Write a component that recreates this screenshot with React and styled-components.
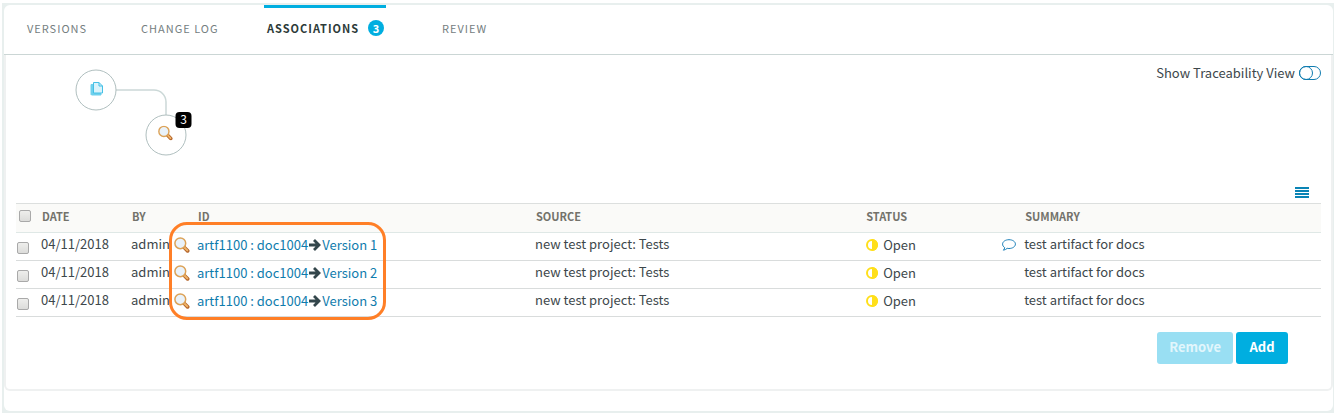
import React from "react";
import styled, { createGlobalStyle, css } from "styled-components";

const sans = `"Noto Sans CJK SC", "Noto Sans", sans-serif`;

const Global = createGlobalStyle`
  *, *::before, *::after { box-sizing: border-box; }
  body {
    margin: 0;
    padding: 3px 3px 4px 2px;
    background: #fff;
    color: #3d474b;
    font: 13px/20px ${sans};
  }
`;

const Frame = styled.div`
  padding: 2px 1px 2px 2px;
  background: #e8efee;
`;

const Card = styled.main`
  padding-bottom: 20px;
  background: #fff;
  border-radius: 6px;
`;

const Tabs = styled.nav`
  display: flex;
  height: 50px;
  padding-left: 20px;
  border-bottom: 1px solid #cbd6d5;
`;

const Tab = styled.button`
  display: flex;
  align-items: center;
  width: ${(p) => p.$width}px;
  padding: 0 0 6px 3px;
  border: 0;
  border-top: 3px solid transparent;
  background: none;
  color: #75807f;
  font: 400 11px/20px ${sans};
  letter-spacing: 1px;
  margin-right: ${(p) => p.$gap || 0}px;
  white-space: nowrap;
  ${(p) =>
    p.$active &&
    css`
      border-top-color: #00aee0;
      color: #2c3a38;
      font-weight: 600;
    `}
`;

const Count = styled.span`
  width: 16px;
  height: 16px;
  margin: 0 2px 0 auto;
  border-radius: 50%;
  background: #00aee0;
  color: #fff;
  font-size: 11px;
  line-height: 16px;
  letter-spacing: 0;
  text-align: center;
`;

const Panel = styled.section`
  padding: 8px 10px 25px;
  border: 2px solid #eff1f1;
  border-top: 0;
  border-radius: 0 0 6px 6px;
`;

const Top = styled.div`
  display: flex;
  justify-content: space-between;
  align-items: flex-start;
  height: 120px;
  padding-left: 54px;
`;

const ToggleLabel = styled.label`
  display: flex;
  align-items: center;
  gap: 4px;
`;

const Toggle = styled.input`
  appearance: none;
  width: 22px;
  height: 14px;
  margin: 0;
  border: 1px solid #0f7cb0;
  border-radius: 7px;
  &::before {
    content: "";
    display: block;
    width: 14px;
    height: 14px;
    margin: -1px;
    border: 1px solid #0f7cb0;
    border-radius: 50%;
  }
`;

const ListBar = styled.div`
  display: flex;
  justify-content: flex-end;
  height: 20px;
  padding: 4px 12px 0 0;
`;

const IconButton = styled.button`
  display: block;
  height: 12px;
  padding: 0;
  border: 0;
  background: none;
  svg { display: block; }
`;

const TableWrap = styled.div`
  position: relative;
`;

const Table = styled.table`
  width: 100%;
  table-layout: fixed;
  border-collapse: collapse;
  border-top: 1px solid #dcdfde;
`;

const Col = styled.col`
  width: ${(p) => p.$w};
`;

const Th = styled.th`
  height: 29px;
  padding: 0 0 4px 1px;
  border-bottom: 1px solid #dfe8e6;
  background: #fafaf8;
  color: #73726b;
  font: 600 11px/20px ${sans};
  text-align: left;
`;

const Td = styled.td`
  height: 28px;
  padding: ${(p) => (p.$low ? "0 0 4px" : "0 0 6px")};
  border-bottom: 1px solid #d9dcdc;
  white-space: nowrap;
  overflow: hidden;
  svg { display: block; }
`;

const Inline = styled.span`
  display: flex;
  align-items: center;
  gap: ${(p) => p.$gap}px;
`;

const Check = styled.input`
  appearance: none;
  display: block;
  width: 12px;
  height: 12px;
  margin: ${(p) => (p.$row ? "7px 0 0 1px" : "0 0 0 2px")};
  border: 1px solid #a9a9a9;
  border-radius: 2px;
  background: linear-gradient(#eeeeec, #dcdcda);
`;

const Link = styled.a`
  color: #0f7cad;
  text-decoration: none;
`;

const Highlight = styled.div`
  position: absolute;
  top: 19px;
  left: 153px;
  width: 217px;
  height: 98px;
  border: 3px solid #ff7f27;
  border-radius: 18px;
  pointer-events: none;
`;

const Actions = styled.div`
  display: flex;
  justify-content: flex-end;
  gap: 3px;
  padding: 15px 33px 0 0;
`;

const Button = styled.button`
  min-width: 52px;
  height: 32px;
  padding: 0 12px 2px;
  border: 0;
  border-radius: 3px;
  background: #00aee0;
  color: #fff;
  font: 600 13px/20px ${sans};
  &:disabled {
    background: #99dff3;
    color: #e2f6fc;
  }
`;

const Lens = () => (
  <>
    <path d="M10.300 10.500l3.300 3.300" stroke="#b5652b" strokeWidth="3.800" strokeLinecap="round" />
    <path d="M10.700 10.700l2.600 2.700" stroke="#eeb469" strokeWidth="2" strokeLinecap="round" />
    <circle cx="6.300" cy="6.300" r="5.400" fill="#e9f2fa" stroke="#dca257" strokeWidth="1.500" />
  </>
);

const LensIcon = () => (
  <svg width="18" height="16" viewBox="-1 0 18 16" fill="none"><Lens /></svg>
);

const Arrow = () => (
  <svg width="12" height="12" viewBox="0 0 12 12" fill="none" stroke="#33464b" strokeWidth="2.800">
    <path d="M0 6h9.500M5 1l5 5-5 5" />
  </svg>
);

const HalfCircle = () => (
  <svg width="13" height="12" viewBox="-1 0 13 12">
    <circle cx="6" cy="6" r="5" fill="#fff" stroke="#ffdf1a" strokeWidth="2" />
    <path d="M6 0a6 6 0 0 1 0 12z" fill="#ffdf1a" />
  </svg>
);

const Comment = () => (
  <svg width="14" height="12" viewBox="0 0 14 12" fill="#fff" stroke="#1b7fb8">
    <path d="M7 .7c3.600 0 6.400 1.900 6.400 4.400S10.600 9.500 7 9.500c-.6 0-1.200 0-1.800-.2-.9.900-2.200 1.700-3.800 1.900.7-.8 1.200-1.500 1.300-2.600C1.300 7.800.6 6.500.6 5.100.6 2.600 3.400.7 7 .7z" />
  </svg>
);

const Diagram = () => (
  <svg width="124" height="100" viewBox="70 63 124 100" fill="none" role="img" aria-label="Association graph">
    <path d="M116 90h38a12 12 0 0 1 12 12v13" stroke="#cbd8d7" strokeWidth="1.500" />
    <circle cx="96" cy="90" r="20" fill="#fff" stroke="#b0bfbf" />
    <circle cx="166" cy="135" r="20" fill="#fff" stroke="#b0bfbf" />
    <path d="M91 84.500h5v9h5v1.500h-9.500l-.5-.5z" fill="#6fd0ec" stroke="#6fd0ec" />
    <path d="M93.500 82.500h5.500l3.500 3.500v7h-9z" fill="#daf3fb" stroke="#45c0e6" />
    <path d="M99 82.500v3.500h3.500" stroke="#45c0e6" />
    <svg x="158" y="125.500" width="15" height="15" viewBox="0 0 16 16"><Lens /></svg>
    <rect x="175.500" y="112" width="16" height="16" rx="4" fill="#000" />
    <text x="183.500" y="124" fill="#fff" fontSize="12" textAnchor="middle">3</text>
  </svg>
);

const rows = [
  { version: "Version 1", comment: true },
  { version: "Version 2" },
  { version: "Version 3" },
];

export default function App() {
  return (
    <>
      <Global />
      <Frame>
        <Card>
          <Tabs>
            <Tab $width={114}>VERSIONS</Tab>
            <Tab $width={126}>CHANGE LOG</Tab>
            <Tab $active $width={122} $gap={53}>
              ASSOCIATIONS<Count>3</Count>
            </Tab>
            <Tab $width={80}>REVIEW</Tab>
          </Tabs>
          <Panel>
            <Top>
              <Diagram />
              <ToggleLabel>
                Show Traceability View
                <Toggle type="checkbox" role="switch" />
              </ToggleLabel>
            </Top>
            <ListBar>
              <IconButton aria-label="List options">
                <svg width="14" height="12" fill="#0a84b5">
                  <path d="M0 0h14v2H0zM0 3h14v2H0zM0 6h14v2H0zM0 9h14v2H0z" />
                </svg>
              </IconButton>
            </ListBar>
            <TableWrap>
              <Table>
                <colgroup>
                  <Col $w="25px" />
                  <Col $w="90px" />
                  <Col $w="42px" />
                  <Col $w="24px" />
                  <Col $w="25.9%" />
                  <Col $w="25.3%" />
                  <Col $w="10.5%" />
                  <Col $w="22px" />
                  <Col />
                </colgroup>
                <thead>
                  <tr>
                    <Th><Check type="checkbox" aria-label="Select all" /></Th>
                    <Th>DATE</Th>
                    <Th>BY</Th>
                    <Th />
                    <Th>ID</Th>
                    <Th>SOURCE</Th>
                    <Th>STATUS</Th>
                    <Th />
                    <Th>SUMMARY</Th>
                  </tr>
                </thead>
                <tbody>
                  {rows.map((r) => (
                    <tr key={r.version}>
                      <Td $low><Check $row type="checkbox" aria-label={"Select " + r.version} /></Td>
                      <Td>04/11/2018</Td>
                      <Td>admin</Td>
                      <Td $low><LensIcon /></Td>
                      <Td $low>
                        <Inline $gap={1}>
                          <Link href="#artifact">artf1100 : doc1004</Link>
                          <Arrow />
                          <Link href="#version">{r.version}</Link>
                        </Inline>
                      </Td>
                      <Td>new test project: Tests</Td>
                      <Td $low>
                        <Inline $gap={5}><HalfCircle />Open</Inline>
                      </Td>
                      <Td $low>{r.comment && <Comment />}</Td>
                      <Td>test artifact for docs</Td>
                    </tr>
                  ))}
                </tbody>
              </Table>
              <Highlight />
            </TableWrap>
            <Actions>
              <Button disabled>Remove</Button>
              <Button>Add</Button>
            </Actions>
          </Panel>
        </Card>
      </Frame>
    </>
  );
}
